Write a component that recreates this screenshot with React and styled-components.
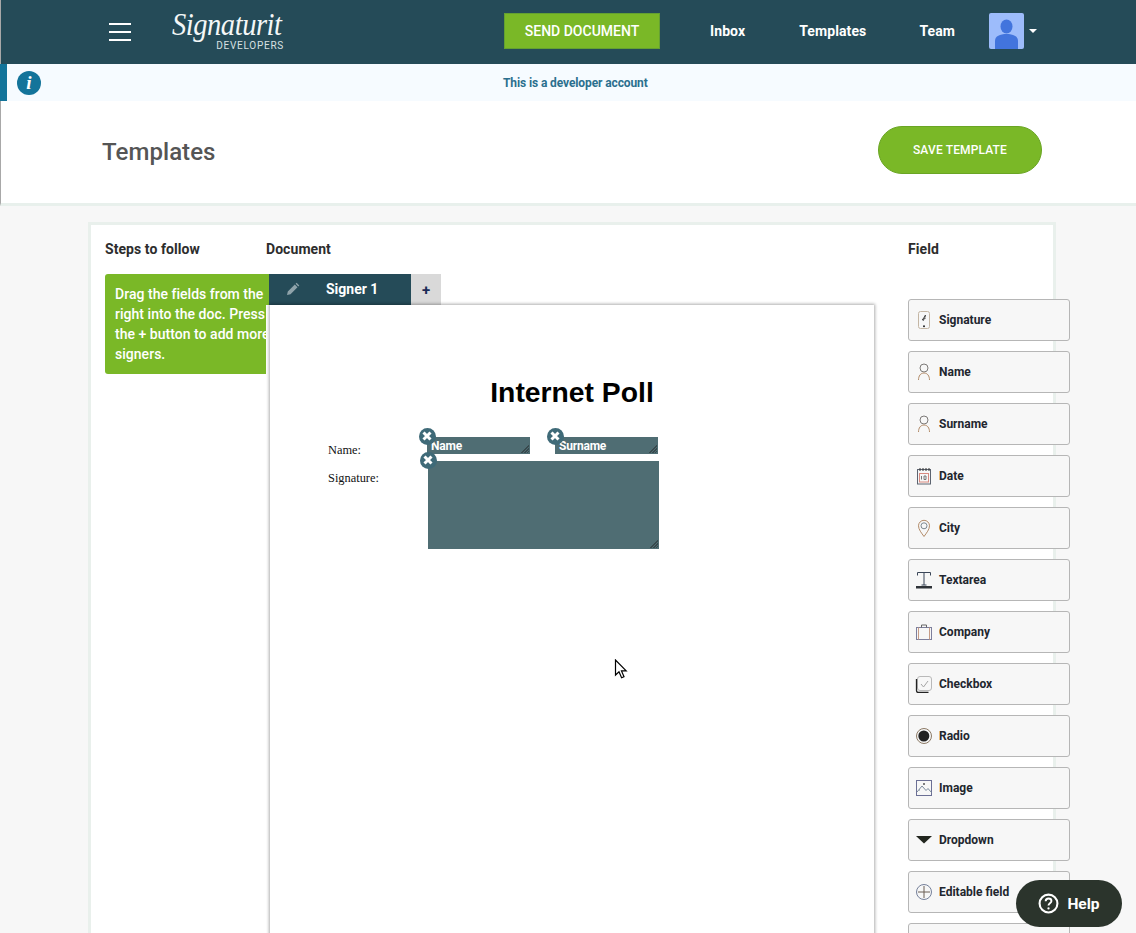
import styled, { createGlobalStyle } from "styled-components";

const GlobalStyle = createGlobalStyle`
  html, body {
    margin: 0;
    padding: 0;
    height: 100%;
    overflow: hidden;
    background: #f7f7f7;
    font-family: Roboto, "Liberation Sans", sans-serif;
  }
`;

const Page = styled.div`
  position: relative;
  width: 1136px;
  height: 933px;
  overflow: hidden;
  background: #f7f7f7;
`;

const TopBar = styled.header`
  height: 64px;
  background: #254b58;
  border-left: 1px solid #a8a8a8;
  box-sizing: border-box;
  display: flex;
  align-items: center;
  padding: 0 0 2px 108px;
`;

const Burger = styled.div`
  width: 22px;
  height: 14px;
  margin-top: 2px;
  border-top: 2px solid #fff;
  border-bottom: 2px solid #fff;
  position: relative;
  &::after {
    content: "";
    position: absolute;
    left: 0;
    right: 0;
    top: 6px;
    height: 2px;
    background: #fff;
  }
`;

const Logo = styled.div`
  width: 112px;
  height: 40px;
  margin-left: 41px;
  color: #fff;
  display: flex;
  flex-direction: column;
`;

const LogoScript = styled.span`
  display: block;
  height: 25px;
  font-family: "Liberation Serif", serif;
  font-style: italic;
  font-size: 31px;
  line-height: 27px;
  letter-spacing: -0.5px;
  white-space: nowrap;
  transform: scaleX(0.92);
  transform-origin: left center;
  color: #f4f7f7;
`;

const LogoSub = styled.span`
  align-self: flex-end;
  margin-top: 4px;
  font-size: 10px;
  line-height: 12px;
  letter-spacing: 0.75px;
  color: #d8e0e2;
`;

const SendButton = styled.button`
  width: 156px;
  height: 36px;
  margin-left: 220px;
  padding: 0;
  background: #7ab827;
  border: 1px solid #64a032;
  color: #fff;
  font: 500 14px Roboto, sans-serif;
`;

const Nav = styled.nav`
  display: flex;
  align-items: center;
  margin-left: 50px;
`;

const NavLink = styled.span`
  color: #fff;
  font-size: 14px;
  font-weight: 700;
  letter-spacing: 0.1px;
  margin-right: ${(props) => props.$gap}px;
`;

const Avatar = styled.div`
  width: 35px;
  height: 36px;
  border-radius: 2px;
  overflow: hidden;
  background: #9dbcfb;
  svg {
    display: block;
  }
`;

const Caret = styled.span`
  width: 0;
  height: 0;
  margin-left: 5px;
  border-left: 4px solid transparent;
  border-right: 4px solid transparent;
  border-top: 4px solid #fff;
`;

const InfoBar = styled.div`
  height: 37px;
  background: #f6fbff;
  border-left: 7px solid #13749a;
  display: flex;
  align-items: center;
  box-sizing: border-box;
`;

const InfoIcon = styled.div`
  width: 24px;
  height: 24px;
  margin-left: 10px;
  border-radius: 50%;
  background: #13749a;
  color: #fff;
  font: italic 700 19px/24px "Liberation Serif", serif;
  text-align: center;
`;

const InfoText = styled.span`
  margin-left: 462px;
  color: #2b6f8e;
  font-size: 12px;
  font-weight: 700;
  letter-spacing: -0.11px;
`;

const TitleBar = styled.div`
  height: 105px;
  box-sizing: border-box;
  background: #fff;
  border-left: 1px solid #a8a8a8;
  border-bottom: 3px solid #e8f0ec;
  display: flex;
  align-items: center;
  justify-content: space-between;
  padding: 0 94px 0 101px;
`;

const PageTitle = styled.h1`
  margin: 0;
  font-size: 24px;
  font-weight: 500;
  letter-spacing: 0.05px;
  color: #555;
`;

const SaveButton = styled.button`
  width: 164px;
  height: 48px;
  margin-top: -5px;
  padding: 0;
  background: #7ab827;
  border: 1px solid #6aa524;
  border-radius: 24px;
  color: #fff;
  font: 500 12px Roboto, sans-serif;
  letter-spacing: 0.15px;
`;

const Card = styled.main`
  width: 968px;
  height: 760px;
  box-sizing: border-box;
  margin: 16px 0 0 88px;
  padding: 14px 0 0 14px;
  background: #fff;
  border: 3px solid #e9f0ec;
  display: grid;
  grid-template-columns: 161px 642px 162px;
  align-items: start;
`;

const ColumnTitle = styled.h2`
  margin: 0;
  font-size: 14px;
  line-height: 20px;
  font-weight: 700;
  letter-spacing: 0.06px;
  color: #2d2d2d;
`;

const StepsBox = styled.div`
  width: 176px;
  height: 100px;
  box-sizing: border-box;
  margin-top: 15px;
  padding: 10px 0 0 10px;
  background: #7ab827;
  border-radius: 3px;
  color: #fff;
  font-size: 14px;
  font-weight: 500;
  letter-spacing: 0.03px;
  line-height: 20px;
  white-space: nowrap;
`;

const DocColumn = styled.section`
  position: relative;
  z-index: 1;
`;

const Tabs = styled.div`
  display: flex;
  margin: 15px 0 0 3px;
`;

const SignerTab = styled.div`
  width: 142px;
  height: 31px;
  box-sizing: border-box;
  padding: 0 0 2px 17px;
  display: flex;
  align-items: center;
  background: #254b58;
  color: #fff;
  font-size: 14px;
  font-weight: 700;
`;

const SignerName = styled.span`
  margin-left: 26px;
`;

const AddTab = styled.div`
  width: 30px;
  height: 31px;
  background: #d9d9d9;
  color: #1c2b57;
  font-size: 15px;
  font-weight: 700;
  line-height: 33px;
  text-align: center;
`;

const PaperGutter = styled.div`
  width: 608px;
  padding-left: 4px;
  box-sizing: border-box;
  background: #fff;
`;

const Paper = styled.div`
  position: relative;
  width: 604px;
  height: 700px;
  box-sizing: border-box;
  padding: 71px 0 0 58px;
  background: #fff;
  box-shadow: 0 0 3px 1px rgba(0, 0, 0, 0.32);
`;

const DocTitle = styled.div`
  margin-left: -58px;
  text-align: center;
  font: 700 28.3px/32px "Liberation Sans", Arial, sans-serif;
  color: #000;
`;

const DocLine = styled.div`
  margin-top: ${(props) => props.$top}px;
  font: 12.4px/16px "Liberation Serif", serif;
  color: #111;
`;

const PlacedField = styled.div`
  position: absolute;
  left: ${(props) => props.$x}px;
  top: ${(props) => props.$y}px;
  width: ${(props) => props.$w}px;
  height: ${(props) => props.$h}px;
  box-sizing: border-box;
  padding-left: 4px;
  background: #4f6d73;
  color: #fff;
  font-size: 12px;
  font-weight: 700;
  letter-spacing: -0.2px;
  line-height: 18px;
`;

const ResizeGrip = styled.span`
  position: absolute;
  right: 1px;
  bottom: 1px;
  width: 9px;
  height: 9px;
  background: repeating-linear-gradient(135deg, transparent 0 1px, #38494d 1px 2px);
  clip-path: polygon(100% 0, 100% 100%, 0 100%);
`;

const RemoveBadge = styled.span`
  position: absolute;
  left: -8px;
  top: -9px;
  width: 17px;
  height: 17px;
  border-radius: 50%;
  background: #3f6a78;
  svg {
    display: block;
  }
`;

const Cursor = styled.svg`
  position: absolute;
  left: 344px;
  top: 354px;
`;

const FieldColumn = styled.aside`
  width: 162px;
`;

const FieldList = styled.div`
  margin-top: 40px;
  display: flex;
  flex-direction: column;
  gap: 10px;
`;

const FieldButton = styled.div`
  height: 42px;
  flex: none;
  box-sizing: border-box;
  display: flex;
  align-items: center;
  background: #f7f7f7;
  border: 1px solid #b6b6b6;
  border-radius: 3px;
  color: #22262e;
  font-size: 12px;
  font-weight: 700;
`;

const FieldIcon = styled.span`
  width: 30px;
  flex: none;
  display: flex;
  justify-content: center;
  svg {
    display: block;
  }
`;

const HelpButton = styled.div`
  position: absolute;
  left: 1016px;
  top: 880px;
  width: 106px;
  height: 47px;
  border-radius: 24px;
  background: #2b342c;
  color: #fff;
  display: flex;
  align-items: center;
  justify-content: center;
  gap: 8px;
  font-size: 15.5px;
  font-weight: 700;
  z-index: 3;
`;

const Icon = ({ children, w = 18, h = 18 }) => (
  <svg width={w} height={h} viewBox={`0 0 ${w} ${h}`} fill="none" strokeWidth="1">
    {children}
  </svg>
);

const fields = [
  {
    label: "Signature",
    icon: (
      <Icon>
        <rect x="3.500" y="0.500" width="11" height="17" rx="2" stroke="#c4b6a4" />
        <path d="M7 9c1.500-1 2.500-4 3.500-5 .5 1-1.500 3-2.500 6M8.500 7.500c.8.4 1.500.2 2.200-.4" stroke="#4a4a4a" />
        <circle cx="9" cy="15.300" r="1" fill="#222" />
      </Icon>
    ),
  },
  {
    label: "Name",
    icon: (
      <Icon>
        <circle cx="9" cy="5" r="4" stroke="#7d7a78" />
        <path d="M3.500 17c0-4 2-7 5.500-7s5.500 3 5.500 7" stroke="#b38c6a" />
      </Icon>
    ),
  },
  {
    label: "Surname",
    icon: (
      <Icon>
        <circle cx="9" cy="5" r="4" stroke="#7d7a78" />
        <path d="M3.500 17c0-4 2-7 5.500-7s5.500 3 5.500 7" stroke="#b38c6a" />
      </Icon>
    ),
  },
  {
    label: "Date",
    icon: (
      <Icon w={16} h={18}>
        <rect x="1.500" y="2.500" width="13" height="14.500" stroke="#5d6470" />
        <rect x="3.500" y="6.500" width="9" height="8.500" stroke="#d98a80" />
        <path d="M4 1v3M7 1v3M10 1v3M13 1v3" stroke="#333" />
        <path d="M5.500 9v3.500M8 9h2v3.500h-2z" stroke="#777" />
      </Icon>
    ),
  },
  {
    label: "City",
    icon: (
      <Icon>
        <path d="M9 17.500C6.500 14 3.500 10.500 3.500 6.800a5.500 5.500 0 0 1 11 0c0 3.700-3 7.200-5.500 10.700z" stroke="#b38c6a" />
        <circle cx="9" cy="6.800" r="3" stroke="#7d8890" />
      </Icon>
    ),
  },
  {
    label: "Textarea",
    icon: (
      <Icon>
        <path d="M2.500 4.500V1.500h13v3M9 1.500V14M6.500 14h5" stroke="#3a4658" />
        <rect x="1" y="15" width="16" height="2.500" fill="#2f3338" />
      </Icon>
    ),
  },
  {
    label: "Company",
    icon: (
      <Icon>
        <rect x="1.500" y="4.500" width="15" height="12" stroke="#7d7f9c" />
        <path d="M3.500 4.500v12M14.500 4.500v12" stroke="#c79c86" />
        <path d="M6.500 4.500v-2.500h5v2.500" stroke="#666" />
      </Icon>
    ),
  },
  {
    label: "Checkbox",
    icon: (
      <Icon>
        <rect x="2.500" y="1.500" width="14" height="14" rx="2.500" stroke="#b9b9b9" />
        <path d="M6 9l2.500 3 4.500-6" stroke="#a5a5a5" />
        <path d="M1.500 4v11.500a2 2 0 0 0 2 2h10" stroke="#222" strokeWidth="1.300" />
      </Icon>
    ),
  },
  {
    label: "Radio",
    icon: (
      <Icon>
        <circle cx="9" cy="9" r="7.500" stroke="#8c7a66" />
        <circle cx="8.800" cy="9" r="5.500" fill="#222" />
      </Icon>
    ),
  },
  {
    label: "Image",
    icon: (
      <Icon>
        <rect x="1.500" y="1.500" width="15" height="15" stroke="#6b6f95" />
        <path d="M2 13l5-6 4 4.500 2-2 3.500 4M5 11l-1 0" stroke="#7a8a9c" />
        <circle cx="9" cy="5" r="1" fill="#555" />
      </Icon>
    ),
  },
  {
    label: "Dropdown",
    icon: (
      <Icon h={10}>
        <path d="M1 1h16l-8 7.500z" fill="#22261f" />
      </Icon>
    ),
  },
  {
    label: "Editable field",
    icon: (
      <Icon>
        <circle cx="9" cy="9" r="7.500" stroke="#75809a" />
        <path d="M9 3v12M3 9h12" stroke="#6b5f55" />
      </Icon>
    ),
  },
  { label: "", icon: null },
];

const CloseGlyph = () => (
  <svg width="17" height="17" viewBox="0 0 17 17">
    <path d="M4.500 4.500l7 7M11.500 4.500l-7 7" stroke="#fff" strokeWidth="3" />
  </svg>
);

function App() {
  return (
    <Page>
      <GlobalStyle />
      <TopBar>
        <Burger />
        <Logo>
          <LogoScript>Signaturit</LogoScript>
          <LogoSub>DEVELOPERS</LogoSub>
        </Logo>
        <SendButton>SEND DOCUMENT</SendButton>
        <Nav>
          <NavLink $gap={54}>Inbox</NavLink>
          <NavLink $gap={53}>Templates</NavLink>
          <NavLink $gap={34}>Team</NavLink>
          <Avatar>
            <svg width="35" height="36" viewBox="0 0 35 36">
              <ellipse cx="17.500" cy="13.500" rx="6" ry="7" fill="#4274dd" />
              <path d="M6 36v-8c0-5 5-7 11.500-7S29 23 29 28v8z" fill="#4274dd" />
            </svg>
          </Avatar>
          <Caret />
        </Nav>
      </TopBar>
      <InfoBar>
        <InfoIcon>i</InfoIcon>
        <InfoText>This is a developer account</InfoText>
      </InfoBar>
      <TitleBar>
        <PageTitle>Templates</PageTitle>
        <SaveButton>SAVE TEMPLATE</SaveButton>
      </TitleBar>
      <Card>
        <div>
          <ColumnTitle>Steps to follow</ColumnTitle>
          <StepsBox>
            Drag the fields from the
            <br />
            right into the doc. Press
            <br />
            the + button to add more
            <br />
            signers.
          </StepsBox>
        </div>
        <DocColumn>
          <ColumnTitle>Document</ColumnTitle>
          <Tabs>
            <SignerTab>
              <svg width="14" height="14" viewBox="0 0 14 14">
                <path d="M1 13l.8-3.500 7-7 2.700 2.700-7 7zM9.600 1.700l1-1 2.700 2.700-1 1z" fill="#8fa3aa" />
              </svg>
              <SignerName>Signer 1</SignerName>
            </SignerTab>
            <AddTab>+</AddTab>
          </Tabs>
          <PaperGutter>
            <Paper>
              <DocTitle>Internet Poll</DocTitle>
              <DocLine $top={34}>Name:</DocLine>
              <DocLine $top={12}>Signature:</DocLine>
              <PlacedField $x={157} $y={132} $w={103} $h={17}>
                Name
                <RemoveBadge>
                  <CloseGlyph />
                </RemoveBadge>
                <ResizeGrip />
              </PlacedField>
              <PlacedField $x={285} $y={132} $w={103} $h={17}>
                Surname
                <RemoveBadge>
                  <CloseGlyph />
                </RemoveBadge>
                <ResizeGrip />
              </PlacedField>
              <PlacedField $x={158} $y={156} $w={231} $h={88}>
                <RemoveBadge>
                  <CloseGlyph />
                </RemoveBadge>
                <ResizeGrip />
              </PlacedField>
              <Cursor width="14" height="21" viewBox="0 0 14 21">
                <path
                  d="M1.500 1v15l3.500-3.300 2.600 6 2.400-1-2.500-5.800h4.700z"
                  fill="#fff"
                  stroke="#000"
                  strokeWidth="1.200"
                />
              </Cursor>
            </Paper>
          </PaperGutter>
        </DocColumn>
        <FieldColumn>
          <ColumnTitle>Field</ColumnTitle>
          <FieldList>
            {fields.map((field, i) => (
              <FieldButton key={i}>
                <FieldIcon>{field.icon}</FieldIcon>
                {field.label}
              </FieldButton>
            ))}
          </FieldList>
        </FieldColumn>
      </Card>
      <HelpButton>
        <svg width="21" height="21" viewBox="0 0 20 20" fill="none">
          <circle cx="10" cy="10" r="8.500" stroke="#fff" strokeWidth="2" />
          <path d="M7.300 7.800c0-1.700 1.300-2.600 2.800-2.600s2.700.9 2.700 2.400c0 2.200-2.800 2.100-2.800 4.300" stroke="#fff" strokeWidth="1.800" />
          <circle cx="10" cy="14.700" r="1.100" fill="#fff" />
        </svg>
        Help
      </HelpButton>
    </Page>
  );
}

export default App;
